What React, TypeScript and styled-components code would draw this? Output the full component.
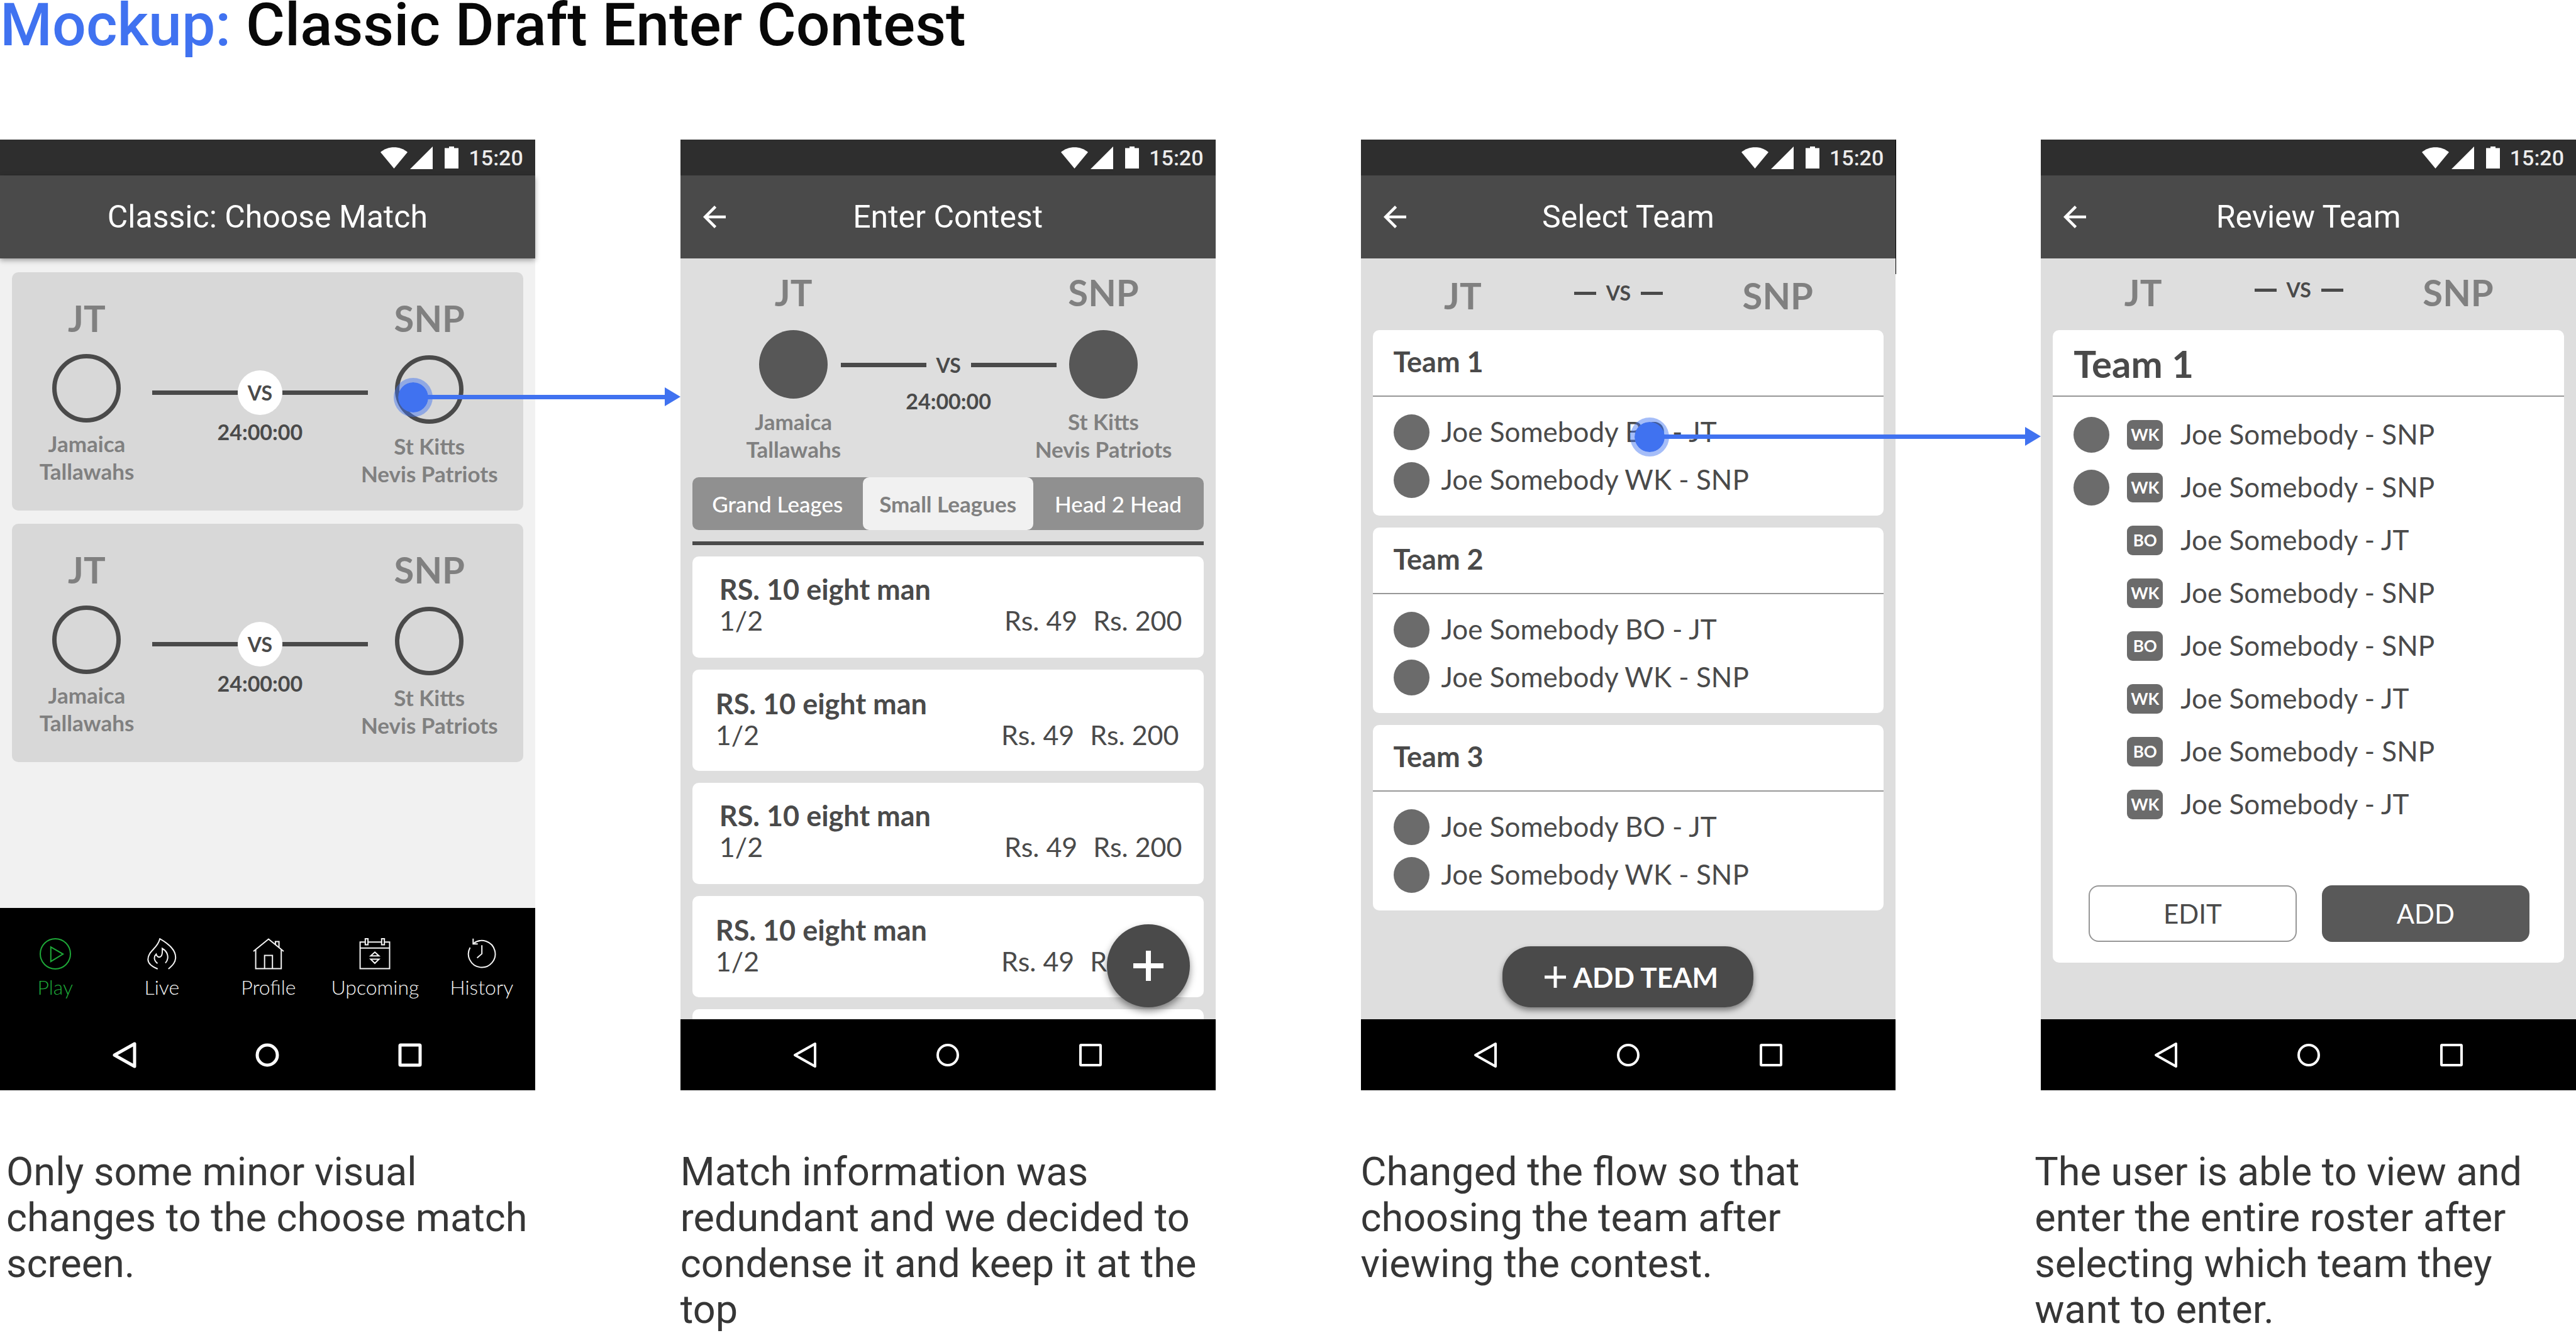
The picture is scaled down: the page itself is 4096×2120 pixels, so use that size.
import React from 'react';
import styled, { createGlobalStyle, css } from 'styled-components';

const color = {
  accent: '#4072f0',
  ink: '#4a4a4a',
  muted: '#808080',
  bar: '#4a4a4a',
  status: '#2e2e2e',
  panel: '#dedede',
  green: '#1ea838',
};

const GlobalStyle = createGlobalStyle`
  *, *::before, *::after { box-sizing: border-box; }
  body { margin: 0; background: #fff; font-family: Roboto, "Liberation Sans", sans-serif; }
  h1, h2, h3, p, ul { margin: 0; padding: 0; font-weight: inherit; }
  ul { list-style: none; }
  button { border: 0; padding: 0; background: none; font: inherit; color: inherit; }
  a { color: inherit; text-decoration: none; }
  svg { display: block; }
`;

const lato = css`font-family: Lato, "Liberation Sans", sans-serif;`;

/* ---------- board ---------- */

const PageTitle = styled.h1`
  height: 222px;
  font-size: 95px;
  line-height: 80px;
  font-weight: 500;
  color: #080808;
  white-space: nowrap;
  span { color: ${color.accent}; }
`;

const Board = styled.main`
  display: grid;
  grid-template-columns: repeat(4, minmax(0, 1fr));
  column-gap: 231px;
`;

const Step = styled.section`
  display: flex;
  flex-direction: column;
`;

const Caption = styled.p<{ $indent?: number }>`
  margin-top: 93px;
  margin-left: ${p => p.$indent ?? 0}px;
  font-size: 63px;
  line-height: 73px;
  color: #363636;
`;

/* ---------- phone frame ---------- */

const Phone = styled.div`
  position: relative;
  display: flex;
  flex-direction: column;
  min-height: 0;
  aspect-ratio: 9 / 16;
`;

const StatusBar = styled.div`
  flex: none;
  display: flex;
  align-items: center;
  justify-content: flex-end;
  height: 57px;
  padding-right: 19px;
  background: ${color.status};
  color: #ececec;
  font-size: 34px;
  font-weight: 500;
  svg { fill: #fff; }
`;

const StatusIcons = styled.span`
  display: flex;
  align-items: center;
  margin-right: 16px;
  gap: 4px;
  svg:last-child { margin-left: 15px; }
`;

const AppBar = styled.header<{ $raised?: boolean }>`
  position: relative;
  z-index: 1;
  flex: none;
  display: grid;
  grid-template-columns: 1fr auto 1fr;
  align-items: center;
  height: 132px;
  padding: 0 36px;
  background: ${color.bar};
  color: #fff;
  box-shadow: ${p => (p.$raised ? '0 3px 8px rgba(0, 0, 0, 0.35)' : 'none')};
  h2 { grid-column: 2; font-size: 50px; line-height: 60px; white-space: nowrap; }
`;

const BackButton = styled.button`
  grid-column: 1;
  justify-self: start;
`;

const Screen = styled.div<{ $bg: string }>`
  flex: 1 1 0;
  min-height: 0;
  display: flex;
  flex-direction: column;
  overflow: hidden;
  background: ${p => p.$bg};
`;

const SystemNav = styled.nav<{ $stroke: number }>`
  flex: none;
  display: grid;
  grid-template-columns: repeat(3, 1fr);
  place-items: center;
  height: 113px;
  padding: 0 85px;
  background: #000;
  svg { fill: none; stroke: #fff; stroke-width: ${p => p.$stroke}; stroke-linejoin: round; }
`;

const EdgeMark = styled.span`
  position: absolute;
  top: 0;
  right: -1px;
  width: 1px;
  height: 214px;
  background: #000;
`;

/* Tap point with an arrow that leads to the next phone */
const TapFlow = styled.span<{ $x: number; $y: number }>`
  position: absolute;
  z-index: 2;
  left: ${p => p.$x}%;
  right: -207px;
  top: ${p => p.$y}%;
  height: 7px;
  margin-top: -4px;
  background: ${color.accent};
  &::before {
    content: '';
    position: absolute;
    left: -31px;
    top: -27px;
    width: 62px;
    height: 62px;
    border: 7px solid rgba(64, 114, 240, 0.47);
    border-radius: 50%;
    background: ${color.accent};
    background-clip: padding-box;
  }
  &::after {
    content: '';
    position: absolute;
    right: -24px;
    top: -12px;
    border-left: 25px solid ${color.accent};
    border-top: 15px solid transparent;
    border-bottom: 15px solid transparent;
  }
`;

/* ---------- match pieces ---------- */

const TeamCode = styled.span`
  ${lato}
  font-size: 58px;
  line-height: 70px;
  font-weight: 700;
  color: ${color.muted};
`;

const SideColumn = styled.div<{ $codeGap: number; $nameGap: number }>`
  display: flex;
  flex-direction: column;
  align-items: center;
  min-width: 0;
  ${TeamCode} { margin-bottom: ${p => p.$codeGap}px; }
  p { margin-top: ${p => p.$nameGap}px; }
`;

const Crest = styled.span<{ $solid?: boolean }>`
  flex: none;
  width: 109px;
  height: 109px;
  border-radius: 50%;
  ${p => (p.$solid ? 'background: #575757;' : `border: 7px solid ${color.ink};`)}
`;

const TeamName = styled.p`
  ${lato}
  font-size: 35px;
  line-height: 44px;
  font-weight: 700;
  color: ${color.muted};
  text-align: center;
  white-space: nowrap;
`;

const Versus = styled.div<{ $gap: number; $top: number }>`
  ${lato}
  display: flex;
  flex-direction: column;
  align-items: center;
  gap: ${p => p.$gap}px;
  padding-top: ${p => p.$top}px;
  color: ${color.ink};
  font-weight: 700;
  time { font-size: 34px; line-height: 43px; }
`;

const VersusLine = styled.div`
  display: flex;
  align-items: center;
  width: 100%;
  font-size: 32px;
  &::before, &::after { content: ''; flex: 1; height: 7px; background: ${color.ink}; }
`;

const VersusLabel = styled.span<{ $disc?: boolean }>`
  display: grid;
  place-items: center;
  width: 71px;
  height: 71px;
  border-radius: 50%;
  background: ${p => (p.$disc ? '#fff' : 'transparent')};
`;

/* ---------- choose match ---------- */

const MatchList = styled.ul`
  flex: 1;
  display: flex;
  flex-direction: column;
  gap: 21px;
  padding: 22px 19px 0;
`;

const MatchCard = styled.li`
  display: grid;
  grid-template-columns: 150fr 343fr 138fr;
  column-gap: 29px;
  padding: 38px 80px 37px 44px;
  border-radius: 10px;
  background: #d8d8d8;
`;

const TabBar = styled.nav`
  ${lato}
  flex: none;
  display: grid;
  grid-template-columns: repeat(5, 1fr);
  height: 177px;
  padding: 48px 0 0 3px;
  background: #000;
  font-size: 32px;
  line-height: 40px;
  font-weight: 300;
`;

const TabLink = styled.a<{ $active?: boolean }>`
  display: flex;
  flex-direction: column;
  align-items: center;
  gap: 8px;
  color: ${p => (p.$active ? color.green : '#f4f4f4')};
  svg { fill: none; stroke: currentColor; stroke-width: 2; }
`;

/* ---------- enter contest ---------- */

const ContestHead = styled.div`
  flex: none;
  display: grid;
  grid-template-columns: 150fr 343fr 150fr;
  padding: 19px 103px 23px 105px;
`;

const Segments = styled.div`
  ${lato}
  flex: none;
  display: grid;
  grid-template-columns: repeat(3, 1fr);
  height: 84px;
  margin: 0 19px;
  border-radius: 10px;
  background: #909090;
  font-size: 35px;
`;

const Segment = styled.button<{ $active?: boolean }>`
  border-radius: 10px;
  font-weight: ${p => (p.$active ? 700 : 500)};
  background: ${p => (p.$active ? '#f1f1f1' : 'transparent')};
  color: ${p => (p.$active ? color.muted : '#fff')};
`;

const Rule = styled.hr`
  flex: none;
  height: 6px;
  margin: 18px 19px;
  border: 0;
  background: ${color.ink};
`;

const ContestList = styled.ul`
  display: flex;
  flex-direction: column;
  gap: 19px;
  padding: 0 19px;
`;

const ContestCard = styled.li`
  ${lato}
  flex: none;
  height: 161px;
  padding: 27px 34px 0 43px;
  border-radius: 10px;
  background: #fff;
  color: ${color.ink};
  font-size: 43px;
  line-height: 50px;
  &:nth-child(even) { padding: 29px 39px 0 37px; }
  h3 { font-size: 45px; font-weight: 700; }
`;

const ContestFigures = styled.p`
  display: flex;
  gap: 25px;
  span:first-child { flex: 1; }
`;

const Fab = styled.button`
  position: absolute;
  right: 41px;
  bottom: 132px;
  display: grid;
  place-items: center;
  width: 132px;
  height: 132px;
  border-radius: 50%;
  background: ${color.ink};
  box-shadow: 0 6px 12px rgba(0, 0, 0, 0.45);
`;

/* ---------- teams ---------- */

const ShortVersus = styled.div<{ $top: number }>`
  flex: none;
  display: grid;
  grid-template-columns: 325fr 170fr 337fr;
  justify-items: center;
  align-items: start;
  height: 114px;
  padding: ${p => p.$top}px 19px 0 0;
`;

const ShortLine = styled.span`
  ${lato}
  display: flex;
  align-items: center;
  gap: 16px;
  color: ${color.ink};
  font-size: 32px;
  line-height: 62px;
  font-weight: 700;
  &::before, &::after { content: ''; width: 35px; height: 5px; background: ${color.ink}; }
`;

const TeamStack = styled.div`
  display: flex;
  flex-direction: column;
  gap: 19px;
  padding: 0 19px;
`;

const TeamCard = styled.article`
  ${lato}
  flex: none;
  border-radius: 10px;
  background: #fff;
  color: ${color.ink};
`;

const TeamTitle = styled.h3<{ $large?: boolean }>`
  height: 106px;
  padding-left: 33px;
  border-bottom: 2px solid #979797;
  font-size: ${p => (p.$large ? 60 : 45)}px;
  line-height: ${p => (p.$large ? 106 : 100)}px;
  font-weight: 700;
`;

const Roster = styled.ul<{ $gap: number; $top: number; $bottom: number }>`
  display: flex;
  flex-direction: column;
  gap: ${p => p.$gap}px;
  padding: ${p => `${p.$top}px 33px ${p.$bottom}px`};
`;

const Player = styled.li<{ $gap: number }>`
  display: flex;
  align-items: center;
  gap: ${p => p.$gap}px;
  height: 57px;
`;

const Avatar = styled.span<{ $empty?: boolean }>`
  flex: none;
  width: 57px;
  height: 57px;
  border-radius: 50%;
  background: ${p => (p.$empty ? 'transparent' : '#6b6b6b')};
`;

const Role = styled.span`
  flex: none;
  width: 57px;
  border-radius: 9px;
  background: #6b6b6b;
  color: #fff;
  font-size: 26px;
  line-height: 47px;
  font-weight: 700;
  text-align: center;
`;

const PlayerName = styled.span`
  padding-bottom: 2px;
  font-size: 44px;
  line-height: 53px;
  white-space: nowrap;
`;

const AddTeamButton = styled.button`
  ${lato}
  display: flex;
  align-items: center;
  justify-content: center;
  gap: 12px;
  align-self: center;
  width: 399px;
  height: 97px;
  margin: auto 0 19px;
  padding-left: 10px;
  border-radius: 45px;
  background: ${color.ink};
  box-shadow: 0 5px 10px rgba(0, 0, 0, 0.45);
  color: #fff;
  font-size: 44px;
  font-weight: 700;
`;

const Actions = styled.div`
  display: grid;
  grid-template-columns: 1fr 1fr;
  gap: 40px;
  padding: 0 55px 33px 57px;
`;

const ActionButton = styled.button<{ $primary?: boolean }>`
  height: 90px;
  border: 2px solid ${p => (p.$primary ? '#595959' : '#979797')};
  border-radius: 16px;
  background: ${p => (p.$primary ? '#595959' : '#fff')};
  color: ${p => (p.$primary ? '#fff' : color.ink)};
  font-size: 42px;
`;

/* ---------- icons ---------- */

const Plus = ({ size, weight }: { size: number; weight: number }) => (
  <svg width={size} height={size} viewBox={`0 0 ${size} ${size}`} stroke="#fff" strokeWidth={weight} aria-hidden="true">
    <path d={`M${size / 2} 0V${size}M0 ${size / 2}H${size}`} />
  </svg>
);

const tabs = [
  { label: 'Play', icon: <><circle cx="25" cy="25" r="24" /><path d="M17.8 14.1L37.2 25.3L17.8 37.2Z" /></> },
  {
    label: 'Live',
    icon: <>
      <path d="M18.7 49C9 45 3.3 40 3.3 34C3.3 20 18.5 17 22.2 1C36 9 47.2 18 47.2 30.5C47.2 38 43 43 35.8 49" />
      <path d="M18.5 40.2C12 35 12.5 29 16.3 25.5C17 29 20 31 23 29.7C26 28.2 26.5 24 26 16.5C36 22 37 33 31 39.7" />
    </>,
  },
  {
    label: 'Profile',
    icon: <>
      <path d="M1 21L25 1.5L49 21M4.6 18.5V48.5H45.2V18.5M18.7 48V27.5H31.2V48" />
      <path d="M35.9 10V5.5H41.6V14.5" />
    </>,
  },
  {
    label: 'Upcoming',
    icon: <>
      <path d="M1.6 6.3H48.5V48.6H1.6ZM1.6 15.8H48.5" />
      <path d="M9.8 1H14.1V10.5H9.8ZM35.8 1H40.2V10.5H35.8Z" fill="#000" />
      <path d="M25 22.3L31.6 28.3H18.4ZM25 40L31.6 33.5H18.4Z" />
    </>,
  },
  {
    label: 'History',
    icon: <>
      <path d="M6.5 14.9A21.3 21.3 0 1 0 12.2 8.3" />
      <path d="M11.3 0.7V9.2H18.7M25.2 11.2V24.9L17.6 31.4" />
    </>,
  },
];

/* ---------- composed parts ---------- */

interface FrameProps {
  title: string;
  back?: boolean;
  bg?: string;
  navStroke?: number;
  overlay?: React.ReactNode;
  children: React.ReactNode;
}

function Frame({ title, back = true, bg = color.panel, navStroke = 4, overlay, children }: FrameProps) {
  return (
    <Phone>
      <StatusBar>
        <StatusIcons aria-hidden="true">
          <svg width="43" height="34" viewBox="0 0 43 34"><path d="M0 8C12 -2.500 31 -2.500 43 8L21.500 34Z" /></svg>
          <svg width="36" height="36" viewBox="0 0 36 36"><path d="M36 0V36H0Z" /></svg>
          <svg width="22" height="35" viewBox="0 0 22 35"><path d="M7 0H15V2.500H22V35H0V2.500H7Z" /></svg>
        </StatusIcons>
        15:20
      </StatusBar>
      <AppBar $raised={!back}>
        {back && (
          <BackButton aria-label="Back">
            <svg width="36" height="36" viewBox="4 4 16 16" fill="#fff">
              <path d="M20 11H7.830l5.590-5.590L12 4l-8 8 8 8 1.410-1.410L7.830 13H20v-2z" />
            </svg>
          </BackButton>
        )}
        <h2>{title}</h2>
      </AppBar>
      <Screen $bg={bg}>{children}</Screen>
      <SystemNav $stroke={navStroke}>
        <button aria-label="System back">
          <svg width="40" height="44" viewBox="0 0 40 44"><path d="M36 4V40L4 22Z" /></svg>
        </button>
        <button aria-label="Home">
          <svg width="38" height="38" viewBox="0 0 38 38"><circle cx="19" cy="19" r="16" /></svg>
        </button>
        <button aria-label="Recent apps">
          <svg width="38" height="38" viewBox="0 0 38 38"><rect x="3" y="3" width="32" height="32" rx="1" /></svg>
        </button>
      </SystemNav>
      {overlay}
    </Phone>
  );
}

interface SideProps { code: string; name: [string, string]; solid?: boolean; codeGap: number; nameGap: number }

const Side = ({ code, name, solid, codeGap, nameGap }: SideProps) => (
  <SideColumn $codeGap={codeGap} $nameGap={nameGap}>
    <TeamCode>{code}</TeamCode>
    <Crest $solid={solid} />
    <TeamName>{name[0]}<br />{name[1]}</TeamName>
  </SideColumn>
);

const jamaica: [string, string] = ['Jamaica', 'Tallawahs'];
const stKitts: [string, string] = ['St Kitts', 'Nevis Patriots'];

const Match = () => (
  <MatchCard>
    <Side code="JT" name={jamaica} codeGap={22} nameGap={11} />
    <Versus $top={118} $gap={5}>
      <VersusLine><VersusLabel $disc>VS</VersusLabel></VersusLine>
      <time>24:00:00</time>
    </Versus>
    <Side code="SNP" name={stKitts} codeGap={24} nameGap={13} />
  </MatchCard>
);

const ShortMatch = ({ top }: { top: number }) => (
  <ShortVersus $top={top}>
    <TeamCode>JT</TeamCode>
    <ShortLine>VS</ShortLine>
    <TeamCode>SNP</TeamCode>
  </ShortVersus>
);

const roster = [
  ['WK', 'SNP', true], ['WK', 'SNP', true], ['BO', 'JT', false], ['WK', 'SNP', false],
  ['BO', 'SNP', false], ['WK', 'JT', false], ['BO', 'SNP', false], ['WK', 'JT', false],
] as const;

export default function App() {
  return (
    <>
      <GlobalStyle />
      <PageTitle><span>Mockup:</span> Classic Draft Enter Contest</PageTitle>
      <Board>
        <Step>
          <Frame title="Classic: Choose Match" back={false} bg="#f1f1f1" navStroke={5} overlay={<TapFlow $x={77.2} $y={27.1} />}>
            <MatchList>
              <Match />
              <Match />
            </MatchList>
            <TabBar>
              {tabs.map((tab, i) => (
                <TabLink key={tab.label} href="#" $active={i === 0}>
                  <svg width="50" height="50" viewBox="0 0 50 50" aria-hidden="true">{tab.icon}</svg>
                  {tab.label}
                </TabLink>
              ))}
            </TabBar>
          </Frame>
          <Caption $indent={10}>Only some minor visual changes to the choose match screen.</Caption>
        </Step>

        <Step>
          <Frame title="Enter Contest" overlay={<Fab aria-label="Add"><Plus size={48} weight={8} /></Fab>}>
            <ContestHead>
              <Side code="JT" name={jamaica} solid codeGap={25} nameGap={14} />
              <Versus $top={115} $gap={0}>
                <VersusLine><VersusLabel>VS</VersusLabel></VersusLine>
                <time>24:00:00</time>
              </Versus>
              <Side code="SNP" name={stKitts} solid codeGap={25} nameGap={14} />
            </ContestHead>
            <Segments>
              <Segment>Grand Leages</Segment>
              <Segment $active>Small Leagues</Segment>
              <Segment>Head 2 Head</Segment>
            </Segments>
            <Rule />
            <ContestList>
              {[1, 2, 3, 4].map(n => (
                <ContestCard key={n}>
                  <h3>RS. 10 eight man</h3>
                  <ContestFigures><span>1/2</span><span>Rs. 49</span><span>Rs. 200</span></ContestFigures>
                </ContestCard>
              ))}
              <ContestCard />
            </ContestList>
          </Frame>
          <Caption>Match information was redundant and we decided to condense it and keep it at the top</Caption>
        </Step>

        <Step>
          <Frame title="Select Team" overlay={<><EdgeMark /><TapFlow $x={54} $y={31.3} /></>}>
            <ShortMatch top={24} />
            <TeamStack>
              {[1, 2, 3].map(n => (
                <TeamCard key={n}>
                  <TeamTitle>Team {n}</TeamTitle>
                  <Roster $top={28} $gap={19} $bottom={28}>
                    <Player $gap={19}><Avatar /><PlayerName>Joe Somebody BO - JT</PlayerName></Player>
                    <Player $gap={19}><Avatar /><PlayerName>Joe Somebody WK - SNP</PlayerName></Player>
                  </Roster>
                </TeamCard>
              ))}
            </TeamStack>
            <AddTeamButton><Plus size={34} weight={5} />ADD TEAM</AddTeamButton>
          </Frame>
          <Caption>Changed the flow so that choosing the team after viewing the contest.</Caption>
        </Step>

        <Step>
          <Frame title="Review Team">
            <ShortMatch top={19} />
            <TeamStack>
              <TeamCard>
                <TeamTitle $large>Team 1</TeamTitle>
                <Roster $top={32} $gap={27} $bottom={100}>
                  {roster.map(([role, side, picked], i) => (
                    <Player key={i} $gap={28}>
                      <Avatar $empty={!picked} />
                      <Role>{role}</Role>
                      <PlayerName>Joe Somebody - {side}</PlayerName>
                    </Player>
                  ))}
                </Roster>
                <Actions>
                  <ActionButton>EDIT</ActionButton>
                  <ActionButton $primary>ADD</ActionButton>
                </Actions>
              </TeamCard>
            </TeamStack>
          </Frame>
          <Caption $indent={-10}>The user is able to view and enter the entire roster after selecting which team they want to enter.</Caption>
        </Step>
      </Board>
    </>
  );
}
